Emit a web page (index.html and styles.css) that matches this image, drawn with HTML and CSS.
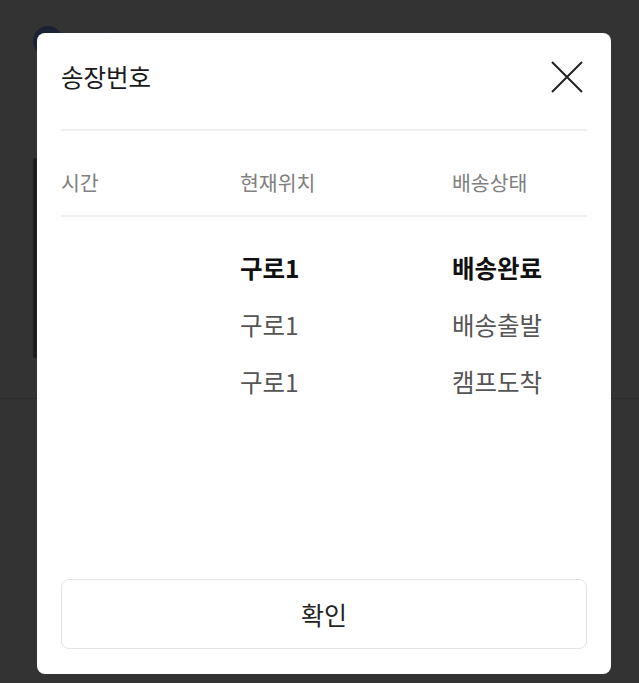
FILE: index.html
```html
<!DOCTYPE html>
<html lang="ko">
<head>
<meta charset="utf-8">
<title>송장번호</title>
<link rel="stylesheet" href="styles.css">
</head>
<body>
<div class="page">
  <div class="bg-header">
    <span class="bg-logo"></span>
    <span class="bg-brand">포켓인</span>
  </div>
  <div class="bg-side"></div>
  <div class="bg-line"></div>
</div>
<div class="overlay">
  <div class="modal">
    <div class="modal-head">
      <h1 class="modal-title">송장번호</h1>
      <button class="close" aria-label="닫기">
        <svg viewBox="0 0 32 32" width="32" height="32"><path d="M1 1 L31 31 M31 1 L1 31" stroke="#222" stroke-width="2" fill="none"/></svg>
      </button>
    </div>
    <div class="table">
      <div class="row head">
        <div>시간</div><div>현재위치</div><div>배송상태</div>
      </div>
      <div class="body">
        <div class="row current"><div></div><div>구로1</div><div>배송완료</div></div>
        <div class="row"><div></div><div>구로1</div><div>배송출발</div></div>
        <div class="row"><div></div><div>구로1</div><div>캠프도착</div></div>
      </div>
    </div>
    <button class="confirm">확인</button>
  </div>
</div>
</body>
</html>
```
FILE: styles.css
```css
* { box-sizing: border-box; }
html, body { margin: 0; padding: 0; }
body {
  width: 639px;
  height: 683px;
  overflow: hidden;
  background: #333333;
  font-family: "Noto Sans CJK KR", "Noto Sans", sans-serif;
  position: relative;
}
.page { height: 683px; display: flex; flex-direction: column; padding: 24px 0 0 33px; }
.bg-header { display: flex; align-items: center; gap: 8px; height: 34px; }
.bg-logo { width: 30px; height: 30px; border-radius: 50%; background: #1b2233; }
.bg-brand { color: #2c3447; font-size: 24px; font-weight: 700; }
.bg-side { width: 4px; height: 200px; margin-top: 100px; background: #1e1e1e; border-radius: 2px; }
.bg-line { height: 1px; background: #2c2c2c; margin: 40px 0 0 -33px; }

.overlay {
  position: absolute;
  inset: 0;
  padding: 33px 28px 0 37px;
}
.modal {
  width: 574px;
  height: 641px;
  background: #fff;
  border-radius: 8px;
  padding: 0 24px 25px;
  display: flex;
  flex-direction: column;
}
.modal-head {
  display: flex;
  align-items: center;
  justify-content: space-between;
  padding: 28px 0 36px;
  border-bottom: 2px solid #efefef;
}
.modal-title {
  margin: 0;
  font-size: 24.5px;
  font-weight: 400;
  line-height: 32px;
  color: #1a1a1a;
}
.close {
  border: 0;
  background: none;
  padding: 0;
  width: 32px;
  height: 32px;
  display: block;
  margin-right: 4px;
}
.close svg { display: block; }
.table { flex: 1; }
.row {
  display: grid;
  grid-template-columns: 179px 212px 1fr;
  height: 57px;
  align-items: center;
  font-size: 24.5px;
  line-height: 32px;
  color: #555;
}
.row.head {
  height: auto;
  padding: 38px 0 20px;
  line-height: 26px;
  font-size: 20.5px;
  color: #808080;
  border-bottom: 2px solid #efefef;
}
.body { padding-top: 22px; }
.row.current { color: #111; font-weight: 700; }
.confirm {
  display: block;
  width: 100%;
  height: 70px;
  background: #fff;
  border: 1.5px solid #e2e2e2;
  border-radius: 8px;
  font-family: inherit;
  font-size: 25px;
  color: #222;
}
```
